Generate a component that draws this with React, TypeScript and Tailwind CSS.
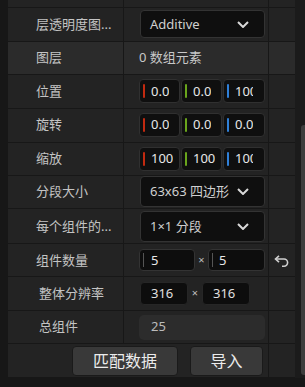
import React from "react";

const font = {
  fontFamily: '"Noto Sans", "Noto Sans CJK SC", sans-serif',
};

function Chevron() {
  return (
    <svg width="12" height="7" viewBox="0 0 12 7" className="shrink-0">
      <polyline points="1,1 6,6 11,1" fill="none" stroke="#d8d8d8" strokeWidth="2" />
    </svg>
  );
}

function UndoIcon() {
  return (
    <svg width="16" height="12" viewBox="0 0 16 12">
      <path d="M5 0.8 L1.5 4 L5 7.2" fill="none" stroke="#cfcfcf" strokeWidth="1.6" />
      <path d="M1.8 4 H10 a3.6 3.6 0 0 1 0 7.2 H8" fill="none" stroke="#cfcfcf" strokeWidth="1.6" />
    </svg>
  );
}

function Row({
  label,
  h,
  hl,
  labelPl = "pl-[28px]",
  children,
  extra,
}: {
  label?: string;
  h: string;
  hl?: boolean;
  labelPl?: string;
  children?: React.ReactNode;
  extra?: React.ReactNode;
}) {
  return (
    <div className={`flex ${h} border-b border-[#171717] ${hl ? "bg-[#2b2b2b]" : ""}`}>
      <div className={`w-[116px] shrink-0 border-r border-[#171717] flex items-center ${labelPl} text-[13px] text-[#c4c4c4]`}>
        {label}
      </div>
      <div className="w-[145px] shrink-0 border-r border-[#171717] flex items-center pl-[15px]">
        {children}
      </div>
      <div className="flex-1 flex items-center pl-[4px]">{extra}</div>
    </div>
  );
}

function Dropdown({ text, h }: { text: string; h: string }) {
  return (
    <div className={`ml-[1px] w-[125px] ${h} rounded-[4px] border border-[#333333] bg-[#0f0f0f] flex items-center justify-between pl-[9px] pr-[15px] text-[13px] text-[#cfcfcf]`}>
      <span className="whitespace-nowrap">{text}</span>
      <Chevron />
    </div>
  );
}

function Vec({ vals }: { vals: string[] }) {
  const bars = ["bg-[#c22a10]", "bg-[#6aa51c]", "bg-[#2f80d8]"];
  return (
    <div className="flex gap-[1px]">
      {vals.map((v, i) => (
        <div
          key={i}
          className={`${i === 2 ? "w-[42px]" : "w-[41px]"} h-[24px] rounded-[4px] border border-[#303030] bg-[#0f0f0f] flex items-center overflow-hidden`}
        >
          <div className={`ml-[3px] w-[2px] h-[14px] rounded-full shrink-0 ${bars[i]}`} />
          <span
            className={`ml-[6px] text-[13px] text-[#e8e8e8] whitespace-nowrap overflow-hidden ${i === 2 ? "max-w-[18px]" : ""}`}
          >
            {v}
          </span>
        </div>
      ))}
    </div>
  );
}

export default function App() {
  return (
    <div className="w-[305px] h-[387px] bg-[#171717] flex flex-col overflow-hidden" style={font}>
      <div className="flex h-[378px]">
        <div className="w-[8px] shrink-0" />
        <div className="w-[287px] shrink-0 bg-[#232323] flex flex-col">
          <Row h="h-[8px]" />
          <Row label="层透明度图..." h="h-[34px]">
            <Dropdown text="Additive" h="h-[28px]" />
          </Row>
          <Row label="图层" h="h-[33px]" hl>
            <span className="text-[13px] text-[#c8c8c8]">0 数组元素</span>
          </Row>
          <Row label="位置" h="h-[34px]">
            <Vec vals={["0.0", "0.0", "100"]} />
          </Row>
          <Row label="旋转" h="h-[34px]">
            <Vec vals={["0.0", "0.0", "0.0"]} />
          </Row>
          <Row label="缩放" h="h-[33px]">
            <Vec vals={["100", "100", "100"]} />
          </Row>
          <Row label="分段大小" h="h-[34px]">
            <Dropdown text="63x63 四边形" h="h-[31px]" />
          </Row>
          <Row label="每个组件的..." h="h-[35px]">
            <Dropdown text="1×1 分段" h="h-[31px]" />
          </Row>
          <Row
            label="组件数量"
            h="h-[33px]"
            extra={
              <div className="pl-[1px] pt-[1px]">
                <UndoIcon />
              </div>
            }
          >
            <div className="flex items-center">
              <div className="w-[56px] h-[22px] rounded-[4px] border border-[#333333] bg-[#0d0d0d] flex items-center">
                <div className="ml-[3px] w-[1px] h-[14px] bg-[#555555]" />
                <span className="ml-[7px] text-[13px] text-[#e8e8e8]">5</span>
              </div>
              <span className="w-[13px] text-center text-[11px] text-[#bdbdbd]">×</span>
              <div className="w-[57px] h-[22px] rounded-[4px] border border-[#333333] bg-[#0d0d0d] flex items-center">
                <div className="ml-[3px] w-[1px] h-[14px] bg-[#555555]" />
                <span className="ml-[6px] text-[13px] text-[#e8e8e8]">5</span>
              </div>
            </div>
          </Row>
          <Row label="整体分辨率" h="h-[34px]" labelPl="pl-[31px]">
            <div className="flex items-center ml-[1px]">
              <div className="w-[48px] h-[23px] rounded-[4px] border border-[#262626] bg-[#0d0d0d] flex items-center pl-[10px] text-[13px] text-[#e0e0e0]">
                316
              </div>
              <span className="w-[14px] text-center text-[11px] text-[#bdbdbd]">×</span>
              <div className="w-[48px] h-[23px] rounded-[4px] border border-[#262626] bg-[#0d0d0d] flex items-center pl-[10px] text-[13px] text-[#e0e0e0]">
                316
              </div>
            </div>
          </Row>
          <Row label="总组件" h="h-[33px]" labelPl="pl-[31px]">
            <div className="w-[126px] h-[25px] rounded-[5px] bg-[#2c2c2c] flex items-center pl-[12px] text-[13px] text-[#bcbcbc]">
              25
            </div>
          </Row>
          <div className="flex h-[34px] border-b border-[#171717]">
            <div className="w-[261px] shrink-0 border-r border-[#171717] flex items-center pl-[64px] gap-[12px]">
              <button className="w-[106px] h-[30px] rounded-[4px] border border-[#1a1a1a] bg-[#393939] text-[16px] text-[#ececec]">
                匹配数据
              </button>
              <button className="w-[73px] h-[30px] rounded-[4px] border border-[#1a1a1a] bg-[#393939] text-[16px] text-[#ececec]">
                导入
              </button>
            </div>
            <div className="flex-1" />
          </div>
        </div>
        <div className="flex-1 bg-[#1b1b1b] flex flex-col pl-[6px]">
          <div className="h-[125px]" />
          <div className="h-[250px] bg-[#3d3d3d] rounded-l-[3px]" />
        </div>
      </div>
    </div>
  );
}
